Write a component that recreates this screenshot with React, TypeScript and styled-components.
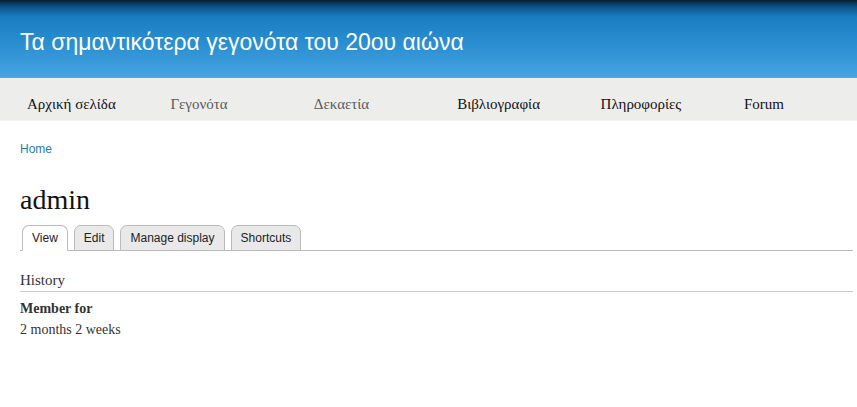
import styled, { createGlobalStyle } from 'styled-components';

const GlobalStyle = createGlobalStyle`
	body {
		margin: 0;
		background: #fff;
		font-family: 'Liberation Serif', serif;
		color: #3b3b3b;
	}
`;

const navItems = [
	{ label: 'Αρχική σελίδα', muted: false },
	{ label: 'Γεγονότα', muted: true },
	{ label: 'Δεκαετία', muted: true },
	{ label: 'Βιβλιογραφία', muted: false },
	{ label: 'Πληροφορίες', muted: false },
	{ label: 'Forum', muted: false },
];

const tabs = ['View', 'Edit', 'Manage display', 'Shortcuts'];

const App = () => {
	return (
		<>
			<GlobalStyle />
			<Header>
				<SiteName>Τα σημαντικότερα γεγονότα του 20ου αιώνα</SiteName>
			</Header>
			<Nav>
				{navItems.map(item => (
					<NavItem key={item.label} $muted={item.muted}>
						{item.label}
					</NavItem>
				))}
			</Nav>
			<Main>
				<Breadcrumb>Home</Breadcrumb>
				<Title>admin</Title>
				<Tabs>
					{tabs.map((tab, index) => (
						<Tab key={tab} $active={index === 0}>
							{tab}
						</Tab>
					))}
				</Tabs>
				<SectionTitle>History</SectionTitle>
				<Label>Member for</Label>
				<Value>2 months 2 weeks</Value>
			</Main>
		</>
	);
};

export default App;

const Header = styled.header`
	height: 78px;
	display: flex;
	align-items: center;
	padding: 0 20px;
	background: linear-gradient(
		to bottom,
		#061f35 0px,
		#0c5488 7px,
		#1a7dc2 17px,
		#2b8fd2 45px,
		#45a3e1 76px,
		#62a7cf 78px
	);
`;

const SiteName = styled.h1`
	margin: 6px 0 0;
	font-family: 'Liberation Sans', Arial, sans-serif;
	font-weight: normal;
	font-size: 23px;
	color: #fff;
`;

const Nav = styled.nav`
	height: 42px;
	display: flex;
	align-items: center;
	background: #edeeec;
	border-bottom: 1px solid #f4f4f4;
`;

const NavItem = styled.a<{ $muted: boolean }>`
	flex: 0 0 143.4px;
	box-sizing: border-box;
	padding-left: 27px;
	padding-top: 10px;
	font-size: 15px;
	color: ${({ $muted }) => ($muted ? '#5a5a5a' : '#111')};
	white-space: nowrap;
`;

const Main = styled.main`
	padding: 0 4px 0 20px;
`;

const Breadcrumb = styled.a`
	display: block;
	margin-top: 21px;
	font-family: 'Liberation Sans', Arial, sans-serif;
	font-size: 12px;
	color: #2e7ba8;
`;

const Title = styled.h2`
	margin: 27px 0 0;
	font-size: 28px;
	font-weight: normal;
	line-height: 34px;
	color: #111;
`;

const Tabs = styled.ul`
	display: flex;
	gap: 6px;
	margin: 8px 0 0;
	padding: 0 0 0 2px;
	list-style: none;
	border-bottom: 1px solid #bbb;
`;

const Tab = styled.li<{ $active: boolean }>`
	padding: 5px 9px 4px;
	margin-bottom: -1px;
	font-family: 'Liberation Sans', Arial, sans-serif;
	font-size: 12px;
	line-height: 15px;
	color: #222;
	background: ${({ $active }) => ($active ? '#fff' : '#e9e9e9')};
	border: 1px solid #bbb;
	border-bottom-color: ${({ $active }) => ($active ? '#fff' : '#bbb')};
	border-radius: 7px 7px 0 0;
`;

const SectionTitle = styled.h3`
	margin: 21px 0 0;
	padding-bottom: 2px;
	font-size: 15px;
	font-weight: normal;
	color: #333;
	border-bottom: 1px solid #ccc;
`;

const Label = styled.div`
	margin-top: 9px;
	font-size: 14px;
	font-weight: bold;
	color: #333;
`;

const Value = styled.div`
	margin-top: 5px;
	font-size: 14px;
	color: #333;
`;
